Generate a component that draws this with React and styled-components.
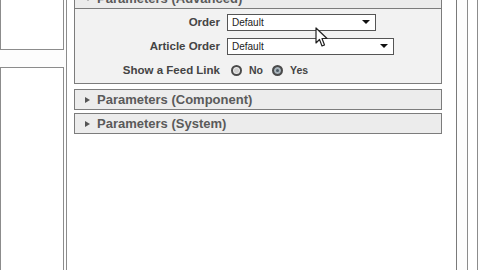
import React from 'react';
import styled, { createGlobalStyle } from 'styled-components';

const GlobalStyle = createGlobalStyle`
  html, body { margin:0; padding:0; background:#fff; overflow:hidden; }
  body { font-family:"Liberation Sans", Arial, sans-serif; }
  * { box-sizing:border-box; }
`;

const Page = styled.div`
  position:relative;
  display:flex;
  width:480px;
  height:270px;
  overflow:hidden;
  background:#fdfdfd;
`;

const Sidebar = styled.div`
  width:64px;
  flex:none;
  display:flex;
  flex-direction:column;
  gap:17px;
`;

const SideBox = styled.div`
  border:1px solid #8c8c8c;
  border-top:none;
  background:#fff;
  height:${p => (p.$grow ? 'auto' : `${p.$h}px`)};
  flex:${p => (p.$grow ? 1 : 'none')};
  border-bottom:${p => (p.$grow ? 'none' : '1px solid #8c8c8c')};
  ${p => p.$grow && 'border-top:1px solid #8c8c8c;'}
`;

const Main = styled.div`
  margin-left:2px;
  width:391px;
  flex:none;
  border-left:1px solid #8c8c8c;
  border-right:1px solid #7a7a7a;
  padding:0 14px 0 7px;
  background:#fff;
`;

const Stack = styled.div`
  margin-top:-12px;
  display:flex;
  flex-direction:column;
`;

const Bar = styled.div`
  height:21px;
  margin-top:${p => p.$gap || 0}px;
  border:1px solid #7c7c7c;
  background:#ececec;
  display:flex;
  align-items:center;
  padding-left:10px;
  gap:6px;
  font-size:13px;
  font-weight:bold;
  color:#5a5a5a;
`;

const Arrow = styled.span`
  width:0;
  height:0;
  ${p => p.$open
    ? 'border-left:3.5px solid transparent; border-right:3.5px solid transparent; border-top:5px solid #555;'
    : 'border-top:3.5px solid transparent; border-bottom:3.5px solid transparent; border-left:5px solid #555;'}
  margin-right:${p => (p.$open ? 0 : 1)}px;
`;

const Body = styled.div`
  border:1px solid #7c7c7c;
  border-top:none;
  background:#f2f2f2;
  padding:1px 0 1px;
  display:grid;
  grid-template-columns:145px 1fr;
  grid-auto-rows:24px;
  column-gap:7px;
  align-items:center;
`;

const Label = styled.div`
  text-align:right;
  font-size:11.5px;
  font-weight:bold;
  color:#444;
`;

const Select = styled.div`
  width:${p => p.$w}px;
  height:17px;
  border:1px solid #555;
  background:#fff;
  display:flex;
  align-items:center;
  justify-content:space-between;
  padding:0 5px 0 4px;
  font-size:10px;
  color:#222;
`;

const Caret = styled.span`
  width:0;
  height:0;
  border-left:4px solid transparent;
  border-right:4px solid transparent;
  border-top:4px solid #111;
`;

const Radios = styled.div`
  display:flex;
  align-items:center;
  padding-left:4px;
  font-size:10.5px;
  font-weight:bold;
  color:#444;
`;

const Radio = styled.span`
  width:11px;
  height:11px;
  border-radius:50%;
  border:2px solid #4a4a4a;
  background:${p => (p.$on ? '#4d5b66' : '#cfcfcf')};
  box-shadow:inset 0 0 0 ${p => (p.$on ? 2 : 1)}px ${p => (p.$on ? '#a9b4bb' : '#eee')};
  margin-right:7px;
`;

const Choice = styled.span`
  margin-right:${p => p.$mr || 0}px;
`;

const RightStrip = styled.div`
  margin-left:10px;
  width:11px;
  flex:none;
  border-left:1px solid #8c8c8c;
  border-right:1px solid #8c8c8c;
  background:#fff;
`;

const Cursor = styled.svg`
  position:absolute;
  left:315px;
  top:27px;
`;

export default function App() {
  return (
    <>
      <GlobalStyle />
      <Page>
        <Sidebar>
          <SideBox $h={50} />
          <SideBox $grow />
        </Sidebar>
        <Main>
          <Stack>
            <Bar><Arrow $open />Parameters (Advanced)</Bar>
            <Body>
              <Label>Order</Label>
              <Select $w={149}>Default<Caret /></Select>
              <Label>Article Order</Label>
              <Select $w={167}>Default<Caret /></Select>
              <Label>Show a Feed Link</Label>
              <Radios>
                <Radio />
                <Choice $mr={9}>No</Choice>
                <Radio $on />
                <Choice>Yes</Choice>
              </Radios>
            </Body>
            <Bar $gap={5}><Arrow />Parameters (Component)</Bar>
            <Bar $gap={3}><Arrow />Parameters (System)</Bar>
          </Stack>
        </Main>
        <RightStrip />
        <Cursor width="14" height="22" viewBox="0 0 14 22">
          <path d="M1 1 L1 16 L4.5 12.5 L7 19 L9.5 18 L7 11.5 L12 11.5 Z" fill="#fff" stroke="#222" strokeWidth="1.2" strokeLinejoin="round" />
        </Cursor>
      </Page>
    </>
  );
}
